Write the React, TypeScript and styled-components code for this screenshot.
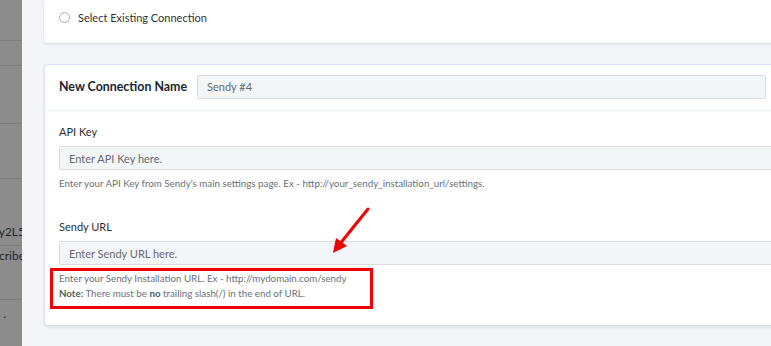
import React from "react";
import styled, { createGlobalStyle } from "styled-components";

const Global = createGlobalStyle`
  html, body { margin: 0; padding: 0; }
  body {
    background: #f3f5f8;
    font-family: Lato, "Open Sans", "Liberation Sans", sans-serif;
    overflow: hidden;
  }
`;

const Page = styled.div`
  display: flex;
  width: 771px;
  height: 346px;
  overflow: hidden;
  position: relative;
`;

const Sidebar = styled.div`
  width: 22px;
  flex: 0 0 22px;
  background: #8c8c8c;
  overflow: hidden;
  display: flex;
  flex-direction: column;
`;

const SideRow = styled.div<{ $h: number; $align?: string }>`
  height: ${(p) => p.$h}px;
  flex: 0 0 ${(p) => p.$h}px;
  border-bottom: 1px solid #7e7e7e;
  box-sizing: border-box;
  display: flex;
  align-items: ${(p) => p.$align || "center"};
  justify-content: flex-end;
  white-space: nowrap;
  font-size: 12px;
  color: #262626;
`;

const SideText = styled.span<{ $shift: number; $pad?: number }>`
  margin-right: ${(p) => p.$shift}px;
  padding: ${(p) => p.$pad || 0}px 0;
`;

const Main = styled.div`
  flex: 1;
  padding-left: 22px;
  display: flex;
  flex-direction: column;
  gap: 21px;
  overflow: hidden;
`;

const TopCard = styled.div`
  width: 760px;
  height: 43px;
  background: #fff;
  border-radius: 0 0 4px 4px;
  box-shadow: 0 1px 3px rgba(0, 0, 0, 0.12);
  display: flex;
  align-items: flex-end;
  padding: 0 0 19px 15px;
  box-sizing: border-box;
`;

const RadioRow = styled.label`
  display: flex;
  align-items: center;
  gap: 8px;
  font-size: 11px;
  color: #333;
`;

const Radio = styled.span`
  width: 9px;
  height: 9px;
  border: 1px solid #a9adb3;
  border-radius: 50%;
  background: #fff;
`;

const Card = styled.div`
  width: 760px;
  height: 261px;
  background: #fff;
  border-top: 1px solid #d3e1fa;
  border-left: 1px solid #dbe6fb;
  border-radius: 4px;
  box-shadow: 0 2px 3px rgba(90, 110, 150, 0.18);
  box-sizing: border-box;
  display: flex;
  flex-direction: column;
`;

const CardHeader = styled.div`
  height: 46px;
  border-bottom: 1px solid #e6eefb;
  display: flex;
  align-items: center;
  padding: 0 0 2px 14px;
  gap: 10px;
  box-sizing: border-box;
`;

const HeaderTitle = styled.div`
  font-size: 12.4px;
  font-weight: 700;
  color: #1d2530;
  width: 128px;
  white-space: nowrap;
`;

const Input = styled.div<{ $w: number }>`
  width: ${(p) => p.$w}px;
  height: 24px;
  box-sizing: border-box;
  background: #f3f6f9;
  border: 1px solid #d9dde2;
  border-radius: 2px;
  display: flex;
  align-items: center;
  padding-left: 9px;
  font-size: 11px;
  color: #666a70;
`;

const CardBody = styled.div`
  padding: 13px 0 0 14px;
  display: flex;
  flex-direction: column;
`;

const Field = styled.div<{ $mt?: number }>`
  display: flex;
  flex-direction: column;
  margin-top: ${(p) => p.$mt || 0}px;
`;

const Label = styled.div`
  font-size: 11px;
  color: #2b2f36;
  height: 15px;
  line-height: 15px;
  margin-bottom: 7px;
`;

const Help = styled.div`
  font-size: 9.75px;
  color: #6b7079;
  line-height: 15px;
  margin-top: 6px;
  white-space: nowrap;
`;

const Annotated = styled.div`
  position: relative;
  margin-top: 6px;
  font-size: 9.75px;
  color: #6b7079;
  line-height: 15px;
  white-space: nowrap;
  &::after {
    content: "";
    position: absolute;
    left: -9px;
    top: -3px;
    width: 323px;
    height: 41px;
    border: 3px solid #f00000;
    box-sizing: border-box;
  }
`;

const Bold = styled.b`
  font-weight: 700;
  color: #555a61;
`;

const Arrow = styled.svg`
  position: absolute;
  left: 325px;
  top: 200px;
  pointer-events: none;
`;

export default function App() {
  return (
    <>
      <Global />
      <Page>
        <Sidebar>
          <SideRow $h={41} />
          <SideRow $h={25} />
          <SideRow $h={58} />
          <SideRow $h={55} />
          <SideRow $h={67} $align="flex-end">
            <SideText $shift={-3} $pad={6}>wy2L5</SideText>
          </SideRow>
          <SideRow $h={54} $align="flex-start">
            <SideText $shift={-3} $pad={2}>scribe</SideText>
          </SideRow>
          <SideRow $h={47} $align="flex-start">
            <SideText $shift={16} $pad={6}>.</SideText>
          </SideRow>
        </Sidebar>
        <Main>
          <TopCard>
            <RadioRow>
              <Radio />
              Select Existing Connection
            </RadioRow>
          </TopCard>
          <Card>
            <CardHeader>
              <HeaderTitle>New Connection Name</HeaderTitle>
              <Input $w={569}>Sendy #4</Input>
            </CardHeader>
            <CardBody>
              <Field>
                <Label>API Key</Label>
                <Input $w={740}>Enter API Key here.</Input>
                <Help>
                  Enter your API Key from Sendy's main settings page. Ex - http://your_sendy_installation_url/settings.
                </Help>
              </Field>
              <Field $mt={28}>
                <Label>Sendy URL</Label>
                <Input $w={740}>Enter Sendy URL here.</Input>
                <Annotated>
                  <div>Enter your Sendy Installation URL. Ex - http://mydomain.com/sendy</div>
                  <div>
                    <Bold>Note:</Bold> There must be <Bold>no</Bold> trailing slash(/) in the end of URL.
                  </div>
                </Annotated>
              </Field>
            </CardBody>
          </Card>
        </Main>
        <Arrow width="50" height="60" viewBox="0 0 50 60">
          <line x1="43" y1="9" x2="14" y2="45" stroke="#f00000" strokeWidth="3" strokeLinecap="round" />
          <polygon points="8,53 11,38 22,46" fill="#f00000" />
        </Arrow>
      </Page>
    </>
  );
}
